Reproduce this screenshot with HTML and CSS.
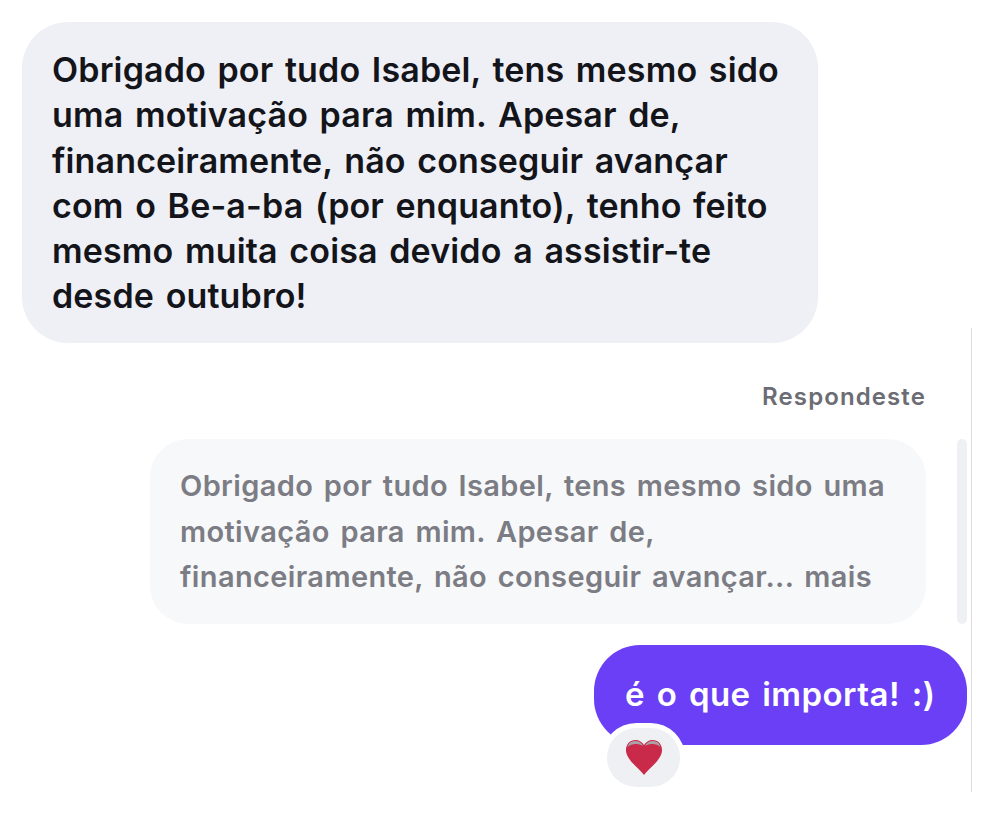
FILE: index.html
```html
<!DOCTYPE html>
<html lang="pt-PT">
<head>
    <meta charset="UTF-8">
    <meta name="viewport" content="width=device-width, initial-scale=1.0">
    <title>Mensagens</title>
    <link rel="stylesheet" href="styles.css">
</head>
<body>
    <div class="thread">
        <div class="bubble-in">
            Obrigado por tudo Isabel, tens mesmo sido<br>
            uma motivação para mim. Apesar de,<br>
            financeiramente, não conseguir avançar<br>
            com o Be-a-ba (por enquanto), tenho feito<br>
            mesmo muita coisa devido a assistir-te<br>
            desde outubro!
        </div>

        <div class="reply-area">
            <div class="reply-label">Respondeste</div>
            <div class="reply-row">
                <div class="bubble-quote">
                    Obrigado por tudo Isabel, tens mesmo sido uma<br>
                    motivação para mim. Apesar de,<br>
                    financeiramente, não conseguir avançar... mais
                </div>
                <div class="reply-bar"></div>
            </div>
            <div class="bubble-out-row">
                <div class="bubble-out">
                    é o que importa! :)
                    <div class="reaction">
                        <svg class="heart" viewBox="0 0 36 35" width="36" height="35">
                            <path d="M18 35 C13 28 0 20 0 10 C0 4 4 0 9.500 0 C13 0 16.300 2 18 5 C19.700 2 23 0 26.500 0 C32 0 36 4 36 10 C36 20 23 28 18 35 Z" fill="#c92a49"/>
                            <path d="M1.500 7 C2.500 3 5.500 1 9.500 1 C13 1 16 3 17 6 C14.500 4.500 12 4 9.500 4 C6.500 4 3.500 5 1.500 7 Z" fill="#a9a3a8"/>
                            <path d="M34.500 7 C33.500 3 30.500 1 26.500 1 C23 1 20 3 19 6 C21.500 4.500 24 4 26.500 4 C29.500 4 32.500 5 34.500 7 Z" fill="#a9a3a8"/>
                        </svg>
                    </div>
                </div>
            </div>
        </div>
    </div>
</body>
</html>
```

FILE: styles.css
```css
html, body {
    margin: 0;
    padding: 0;
    background: #ffffff;
}

body {
    width: 994px;
    height: 814px;
    overflow: hidden;
    font-family: Inter, 'Liberation Sans', Arial, sans-serif;
}

.thread {
    padding: 22px 0 0 22px;
}

.bubble-in {
    box-sizing: border-box;
    width: 796px;
    height: 321px;
    padding: 25px 30px;
    background: #eff0f6;
    border-radius: 46px;
    color: #14151a;
    font-size: 34px;
    font-weight: 600;
    letter-spacing: 0.140px;
    word-spacing: 2.900px;
    line-height: 45.300px;
}

.reply-area {
    box-sizing: border-box;
    width: 950px;
    height: 464px;
    margin-top: -15px;
    padding-top: 55px;
    padding-right: 4px;
    border-right: 1px solid #dcdce0;
}

.reply-label {
    padding-right: 41px;
    text-align: right;
    color: #6c6c74;
    font-size: 24px;
    font-weight: 600;
    letter-spacing: 1.100px;
    line-height: 28px;
}

.reply-row {
    display: flex;
    justify-content: flex-end;
    align-items: stretch;
    gap: 31px;
    margin-top: 28px;
}

.bubble-quote {
    box-sizing: border-box;
    width: 776px;
    height: 185px;
    padding: 24px 30px;
    background: #f7f8fa;
    border-radius: 38px;
    color: #7c7c84;
    font-size: 29px;
    font-weight: 600;
    letter-spacing: 0.370px;
    word-spacing: 2.900px;
    line-height: 45.500px;
}

.reply-bar {
    width: 10px;
    background: #eff0f4;
    border-radius: 5px;
}

.bubble-out-row {
    display: flex;
    justify-content: flex-end;
    margin-top: 21px;
}

.bubble-out {
    position: relative;
    box-sizing: border-box;
    width: 373px;
    height: 100px;
    padding: 27px 31px;
    background: #6a3ff5;
    border-radius: 46px;
    color: #ffffff;
    font-size: 33px;
    font-weight: 600;
    letter-spacing: 0.460px;
    word-spacing: 2.900px;
    line-height: 44px;
    white-space: nowrap;
}

.reaction {
    position: absolute;
    left: 8px;
    top: 78px;
    box-sizing: border-box;
    width: 83px;
    height: 69px;
    display: flex;
    align-items: center;
    justify-content: center;
    background: #eff0f4;
    border: 5px solid #ffffff;
    border-radius: 35px;
}

.heart {
    display: block;
}
```
